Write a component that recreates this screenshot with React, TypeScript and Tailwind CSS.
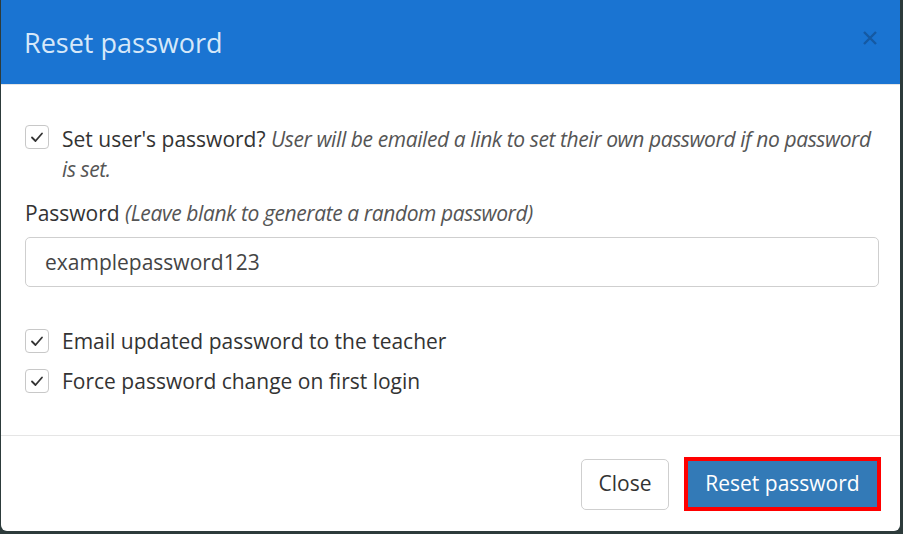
import React from "react";

const Check = () => (
  <span className="flex h-[24px] w-[24px] shrink-0 items-center justify-center rounded-[4px] border border-[#c8c8c8] bg-white">
    <svg width="14" height="12" viewBox="0 0 14 12" fill="none">
      <path d="M2 6.5 L5.5 10 L12 2.5" stroke="#333" strokeWidth="1.8" strokeLinecap="round" strokeLinejoin="round" />
    </svg>
  </span>
);

export default function App() {
  return (
    <div className="h-[534px] w-[903px] bg-[#2d3b3b] pl-[1px]" style={{ fontFamily: '"Open Sans", sans-serif' }}>
      <div className="flex h-[531px] w-[899px] flex-col overflow-hidden rounded-b-[6px] bg-white">
        <div className="flex h-[85px] shrink-0 items-center justify-between border-b border-[#e5e5e5] bg-[#1a74d2] pl-[23px] pr-[24px]">
          <h1 className="text-[27px] leading-none text-[#d6e8f9]">Reset password</h1>
          <svg width="16" height="16" viewBox="0 0 16 16" className="mt-[-8px] mr-[-2px]">
            <path d="M2 2 L14 14 M14 2 L2 14" stroke="#1559a3" strokeWidth="2.4" />
          </svg>
        </div>
        <div className="flex flex-col pl-[24px] pr-[21px] pt-[39px] text-[21px] leading-[30px] text-[#333]">
          <div className="flex gap-[13px]">
            <div className="pt-[1px]"><Check /></div>
            <p className="pr-[2px]">
              Set user's password?{" "}
              <i className="tracking-[-0.4px] text-[#555]">User will be emailed a link to set their own password if no password is set.</i>
            </p>
          </div>
          <div className="mt-[14px]">
            Password <i className="tracking-[-0.4px] text-[#555]">(Leave blank to generate a random password)</i>
          </div>
          <div className="mt-[9px] flex h-[50px] items-center rounded-[5px] border border-[#cfcfcf] px-[19px] text-[#444]">
            examplepassword123
          </div>
          <div className="mt-[39px] flex flex-col gap-[10px]">
            <div className="flex items-center gap-[13px]">
              <Check />
              <span>Email updated password to the teacher</span>
            </div>
            <div className="flex items-center gap-[13px]">
              <Check />
              <span>Force password change on first login</span>
            </div>
          </div>
        </div>
        <div className="mt-[39px] border-t border-[#e5e5e5]" />
        <div className="flex items-center justify-end gap-[15px] pt-[21px] pr-[19px] text-[21px]">
          <button className="h-[51px] w-[88px] rounded-[5px] border border-[#cfcfcf] bg-white text-[#333]">Close</button>
          <div className="border-[4px] border-[#ff0000] bg-[#337ab7]">
            <button className="h-[46px] w-[189px] text-white">Reset password</button>
          </div>
        </div>
      </div>
    </div>
  );
}
